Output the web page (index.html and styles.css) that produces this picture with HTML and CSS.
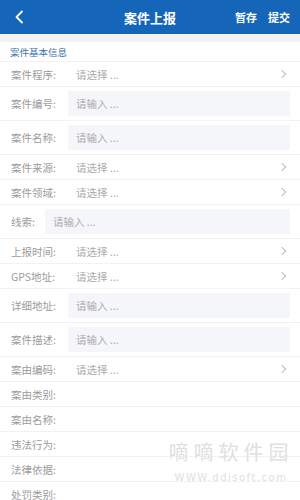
FILE: index.html
```html
<!DOCTYPE html>
<html lang="zh">
<head>
<meta charset="utf-8">
<link rel="stylesheet" href="styles.css">
</head>
<body>
<div class="page">
  <header class="topbar">
    <span class="back"><svg width="10" height="14" viewBox="0 0 10 14"><path d="M8 1.5 L2.5 7 L8 12.5" fill="none" stroke="#fff" stroke-width="1.8" stroke-linecap="round" stroke-linejoin="round"/></svg></span>
    <span class="title">案件上报</span>
    <span class="actions"><span>暂存</span><span>提交</span></span>
  </header>
  <div class="gap"></div>
  <div class="section">案件基本信息</div>
  <div class="form">
    <div class="row sel"><span class="label">案件程序:</span><span class="ph">请选择 ...</span><span class="chev"></span></div>
    <div class="row inp"><span class="label">案件编号:</span><span class="box">请输入 ...</span></div>
    <div class="row inp"><span class="label">案件名称:</span><span class="box">请输入 ...</span></div>
    <div class="row sel"><span class="label">案件来源:</span><span class="ph">请选择 ...</span><span class="chev"></span></div>
    <div class="row sel"><span class="label">案件领域:</span><span class="ph">请选择 ...</span><span class="chev"></span></div>
    <div class="row inp"><span class="label short">线索:</span><span class="box">请输入 ...</span></div>
    <div class="row sel"><span class="label">上报时间:</span><span class="ph">请选择 ...</span><span class="chev"></span></div>
    <div class="row sel"><span class="label">GPS地址:</span><span class="ph">请选择 ...</span><span class="chev"></span></div>
    <div class="row inp"><span class="label">详细地址:</span><span class="box">请输入 ...</span></div>
    <div class="row inp"><span class="label">案件描述:</span><span class="box">请输入 ...</span></div>
    <div class="row sel"><span class="label">案由编码:</span><span class="ph">请选择 ...</span><span class="chev"></span></div>
    <div class="row sel"><span class="label">案由类别:</span></div>
    <div class="row sel"><span class="label">案由名称:</span></div>
    <div class="row sel"><span class="label">违法行为:</span></div>
    <div class="row sel"><span class="label">法律依据:</span></div>
    <div class="row sel"><span class="label">处罚类别:</span></div>
  </div>
  <div class="watermark">
    <div class="wm-cn">嘀嘀软件园</div>
    <div class="wm-en">WWW.ddisoft.com</div>
  </div>
</div>
</body>
</html>
```
FILE: styles.css
```css
* { box-sizing: border-box; }
html, body { margin: 0; padding: 0; }
body {
  width: 300px;
  height: 500px;
  overflow: hidden;
  background: #fff;
  font-family: "Noto Sans CJK SC", "Noto Sans", sans-serif;
}
.page { position: relative; width: 300px; height: 500px; overflow: hidden; }
.topbar {
  height: 34px;
  background: #1565b9;
  color: #fff;
  display: flex;
  align-items: center;
  position: relative;
  padding: 0 10px 0 14px;
}
.back { display: flex; align-items: center; }
.title {
  position: absolute;
  left: 0; right: 0;
  text-align: center;
  font-size: 13px;
  font-weight: bold;
  pointer-events: none;
}
.actions {
  margin-left: auto;
  display: flex;
  gap: 11px;
  font-size: 11px;
  font-weight: bold;
}
.gap { height: 8px; background: #f2f2f2; }
.section {
  height: 20px;
  display: flex;
  align-items: center;
  padding-left: 10px;
  font-size: 9.5px;
  color: #3a72ad;
  border-bottom: 1px solid #f2f2f2;
}
.row {
  display: flex;
  align-items: center;
  padding: 0 10px 0 11px;
  border-bottom: 1px solid #f2f2f2;
  font-size: 10.5px;
  color: #9b9b9b;
}
.row.sel { height: 25px; }
.row.inp { height: 34px; }
.label { width: 57px; flex: none; }
.label.short { width: 34px; }
.ph { color: #ababab; padding-left: 8px; flex: 1; }
.box {
  flex: 1;
  height: 25px;
  background: #f5f6fa;
  display: flex;
  align-items: center;
  padding-left: 8px;
  color: #ababab;
}
.chev {
  width: 6px; height: 6px;
  border-top: 1.2px solid #bdbdbd;
  border-right: 1.2px solid #bdbdbd;
  transform: rotate(45deg);
  margin-right: 5px;
}
.watermark {
  position: absolute;
  left: 166px;
  top: 440px;
  width: 130px;
  color: #e0e0e0;
  text-align: center;
}
.wm-cn { font-size: 20px; letter-spacing: 5px; line-height: 24px; }
.wm-en { font-size: 10px; letter-spacing: 1.5px; line-height: 14px; margin-top: 7px; font-family: "DejaVu Sans", sans-serif; }
```
